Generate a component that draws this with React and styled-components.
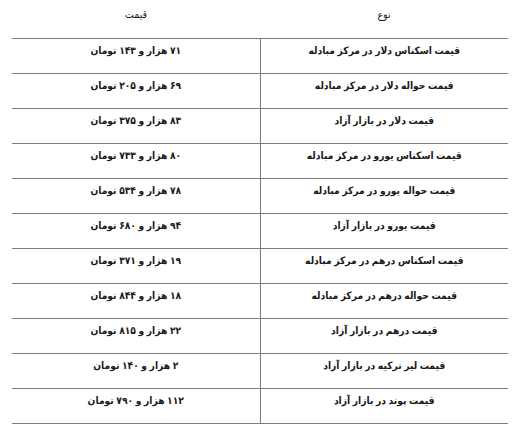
import React from "react";
import styled, { createGlobalStyle } from "styled-components";

const GlobalStyle = createGlobalStyle`
  html, body {
    margin: 0;
    padding: 0;
    background: #ffffff;
  }
  body {
    font-family: "DejaVu Sans Condensed", "DejaVu Sans", Tahoma, sans-serif;
  }
`;

const Page = styled.div`
  padding: 0 11px 0 12px;
  direction: rtl;
`;

const Table = styled.table`
  width: 100%;
  border-collapse: collapse;
  table-layout: fixed;
  color: #1a1a1a;
`;

const HeadCell = styled.th`
  box-sizing: border-box;
  height: 38px;
  padding: 8px 0 0;
  font-size: 10.5px;
  font-weight: normal;
  text-align: center;
  vertical-align: top;
`;

const Row = styled.tr`
  border-top: 1px solid #7c7c7c;
  border-bottom: 1px solid #7c7c7c;
`;

const Cell = styled.td`
  height: 35px;
  padding: 6px 4px 0;
  box-sizing: border-box;
  font-size: 10.2px;
  font-weight: bold;
  word-spacing: -0.6px;
  text-align: center;
  vertical-align: top;
  border-left: ${(p) => (p.$divider ? "1px solid #7c7c7c" : "none")};
`;

const rows = [
  ["قیمت اسکناس دلار در مرکز مبادله", "۷۱ هزار و ۱۴۳ تومان"],
  ["قیمت حواله دلار در مرکز مبادله", "۶۹ هزار و ۲۰۵ تومان"],
  ["قیمت دلار در بازار آزاد", "۸۳ هزار و ۳۷۵ تومان"],
  ["قیمت اسکناس یورو در مرکز مبادله", "۸۰ هزار و ۷۳۳ تومان"],
  ["قیمت حواله یورو در مرکز مبادله", "۷۸ هزار و ۵۳۴ تومان"],
  ["قیمت یورو در بازار آزاد", "۹۴ هزار و ۶۸۰ تومان"],
  ["قیمت اسکناس درهم در مرکز مبادله", "۱۹ هزار و ۳۷۱ تومان"],
  ["قیمت حواله درهم در مرکز مبادله", "۱۸ هزار و ۸۴۴ تومان"],
  ["قیمت درهم در بازار آزاد", "۲۲ هزار و ۸۱۵ تومان"],
  ["قیمت لیر ترکیه در بازار آزاد", "۲ هزار و ۱۴۰ تومان"],
  ["قیمت پوند در بازار آزاد", "۱۱۲ هزار و ۷۹۰ تومان"],
];

const App = () => {
  return (
    <Page>
      <GlobalStyle />
      <Table>
        <thead>
          <tr>
            <HeadCell>نوع</HeadCell>
            <HeadCell>قیمت</HeadCell>
          </tr>
        </thead>
        <tbody>
          {rows.map(([name, price]) => (
            <Row key={name}>
              <Cell $divider>{name}</Cell>
              <Cell>{price}</Cell>
            </Row>
          ))}
        </tbody>
      </Table>
    </Page>
  );
};

export default App;
